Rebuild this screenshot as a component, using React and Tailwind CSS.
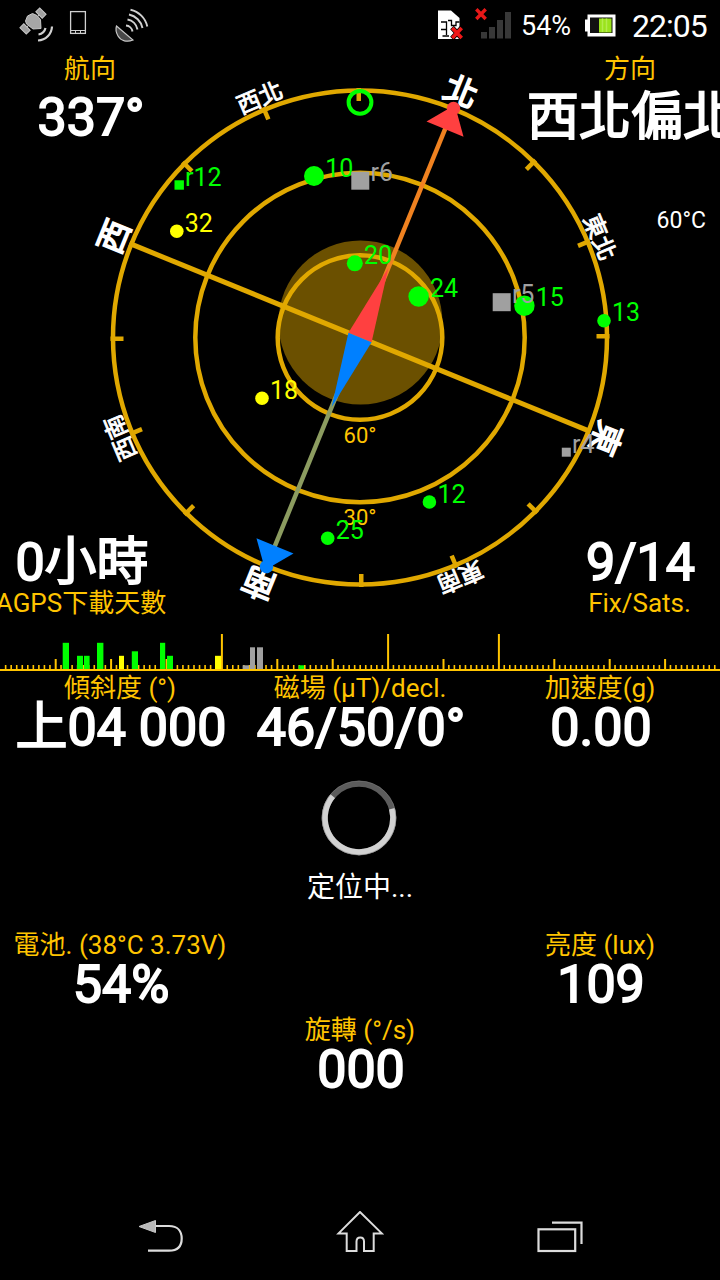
import React from 'react';

const GOLD = '#e0a800';
const AMBER = '#ffc400';
const GREEN = '#00ff00';
const YELLOW = '#ffff00';
const GRAY = '#a0a0a0';

// Sky plot geometry
const CX = 360;
const CY = 337.5;
const HEADING = 22.2;

const satellites = [
  { id: '10', x: 314, y: 176, r: 10, color: GREEN },
  { id: 'r12', x: 179.2, y: 185, r: 4.7, color: GREEN, square: true },
  { id: '32', x: 176.8, y: 231.3, r: 6.8, color: YELLOW },
  { id: '20', x: 354.8, y: 263.3, r: 8, color: GREEN },
  { id: '24', x: 418.6, y: 296.5, r: 10.2, color: GREEN },
  { id: 'r6', x: 360.3, y: 180.7, r: 9, color: GRAY, square: true },
  { id: '15', x: 524.4, y: 305.8, r: 10.2, color: GREEN },
  { id: 'r5', x: 501.7, y: 302.2, r: 9, color: GRAY, square: true },
  { id: '13', x: 604, y: 320.8, r: 6.8, color: GREEN },
  { id: '18', x: 262, y: 398.3, r: 6.8, color: YELLOW },
  { id: '12', x: 429.4, y: 502, r: 6.8, color: GREEN },
  { id: '25', x: 327.7, y: 538.2, r: 6.8, color: GREEN },
  { id: 'r4', x: 566.3, y: 452.2, r: 4.5, color: GRAY, square: true },
];

const directions = [
  { label: '北', angle: 0, major: true },
  { label: '東北', angle: 45 },
  { label: '東', angle: 90, major: true },
  { label: '東南', angle: 135 },
  { label: '南', angle: 180, major: true },
  { label: '西南', angle: 225 },
  { label: '西', angle: 270, major: true },
  { label: '西北', angle: 315 },
];

// [x, width, height, color]
const signalBars = [
  [62.7, 6.3, 26.5, GREEN],
  [77, 6, 13.5, GREEN],
  [84, 5.6, 13.5, GREEN],
  [97, 6.4, 26.5, GREEN],
  [119, 5, 13.5, YELLOW],
  [131.8, 6.2, 18, GREEN],
  [160, 5.2, 26.5, GREEN],
  [167, 6, 13.5, GREEN],
  [215, 6, 13.5, YELLOW],
  [242.6, 6.6, 4, GRAY],
  [250, 5, 22, GRAY],
  [257, 6, 22, GRAY],
  [298.6, 5.4, 4, GREEN],
];

const StatusBar = () => (
  <header className="flex h-[50px] shrink-0 items-center pl-[19px] pr-[11px] text-white">
    {/* GPS satellite */}
    <svg className="h-[50px] w-[36px]" viewBox="19 0 36 50">
      <g transform="rotate(-45 33 21)" stroke="#c8c8c8" strokeWidth="1">
        <rect x="19" y="16.500" width="5.500" height="9" fill="#a0a0a0" />
        <rect x="41.500" y="16.500" width="5.500" height="9" fill="#a0a0a0" />
        <path d="M24.500 21H41.500" />
      </g>
      <path d="M25.500 21L27.500 16L32.500 13.500L37 15.500L40.500 19.500L41 28.500L33 29L26.500 24Z" fill="#a6a6a6" stroke="#c8c8c8" strokeWidth="1" />
      <path d="M45.500 28A8.500 8.500 0 0 1 38.500 34.500M52 26.500A14.500 14.500 0 0 1 38 40.500" fill="none" stroke="#d0d0d0" strokeWidth="2.200" />
    </svg>
    {/* phone */}
    <svg className="ml-[14px] h-[50px] w-[18px]" viewBox="69 0 18 50">
      <rect x="70.600" y="11.600" width="14.800" height="21.800" fill="none" stroke="#d0d0d0" strokeWidth="1.300" />
      <path d="M70 30.500H86M75.500 31V33M80.500 31V33" stroke="#d0d0d0" strokeWidth="1" />
    </svg>
    {/* antenna dish */}
    <svg className="ml-[27px] h-[50px] w-[36px]" viewBox="114 0 36 50">
      <path d="M116.500 26L133 40C127 42.500 121 41 118 36C116 32.500 115.500 29 116.500 26Z" fill="#484848" stroke="#c8c8c8" strokeWidth="1.200" />
      <path d="M126 25.500A7 7 0 0 1 132.500 31.500M127.500 19.500A12.500 12.500 0 0 1 137.500 29.500M129 14.500A17.500 17.500 0 0 1 142.500 28M130.500 9.800A22 22 0 0 1 147.300 26.500" fill="none" stroke="#d0d0d0" strokeWidth="1.900" />
    </svg>
    <div className="flex-1" />
    {/* SIM error */}
    <svg className="h-[50px] w-[28px]" viewBox="436 0 28 50">
      <path d="M438 10.500H451L459.500 18V39H438Z" fill="#fff" />
      <path d="M441 22H446.500V35M441 29.500H446.500M442.500 36H449M448 20.500H451.500V25.500H456V22H459.500" fill="none" stroke="#000" strokeWidth="1.300" />
      <path d="M452 27.500L462 38.500M462 27.500L452 38.500" stroke="#000" strokeWidth="5" />
      <path d="M452.300 28L461.700 38M461.700 28L452.300 38" stroke="#f01818" strokeWidth="3.600" />
    </svg>
    {/* no signal */}
    <svg className="ml-[11px] h-[50px] w-[37px]" viewBox="475 0 37 50">
      <path d="M476.300 9.300L485.700 19M485.700 9.300L476.300 19" stroke="#e81818" strokeWidth="3.400" />
      <path d="M481 32h6v6.500h-6zM489 27h6v11.500h-6zM497 20h6v18.500h-6zM505 12h6v26.500h-6z" fill="#383838" />
    </svg>
    <span className="ml-[9px] w-[53px] pt-[2px] text-[27px] leading-[50px]">54%</span>
    {/* battery */}
    <svg className="ml-[10px] h-[50px] w-[32px]" viewBox="584 0 32 50">
      <path d="M587.500 14.500H615.500V36.500H587.500V31.500H585V19.500H587.500Z" fill="#fff" />
      <rect x="590" y="17.500" width="22.500" height="15.500" fill="#111" />
      <rect x="599" y="18.500" width="12.500" height="14" fill="#9be31c" />
      <path d="M602.500 18.500V32M606.500 18.500V32" stroke="#b4ec4c" strokeWidth="1.500" />
    </svg>
    <span className="ml-[16px] w-[77px] pt-[2px] text-[32px] leading-[50px] tracking-[-1px]">22:05</span>
  </header>
);

const Label = ({ children }) => (
  <span className="whitespace-nowrap text-[26px] leading-[29px] text-[#ffc400]">{children}</span>
);

// The outline gives latin and CJK glyphs the same extra weight
const Value = ({ children }) => (
  <span className="whitespace-nowrap pl-[2px] text-[52px] leading-[52px] text-white [-webkit-text-stroke:1.8px_white]">
    {children}
  </span>
);

const Readout = ({ label, value }) => (
  <div className="flex h-20 w-[240px] flex-col items-center">
    <Label>{label}</Label>
    <div className="-mt-px flex">
      <Value>{value}</Value>
    </div>
  </div>
);

const SkyPlot = () => {
  const ticks = Array.from({ length: 16 }, (_, i) => i * 22.5).filter((a) => a % 90 !== 0);

  return (
    <svg className="absolute inset-0" width="720" height="580" viewBox="0 50 720 580">
      <circle cx="360.500" cy="322.500" r="82" fill="#6b5000" />

      <g fill="none" stroke={GOLD} strokeWidth="4.500">
        <circle cx={CX} cy={CY} r="247" />
        <circle cx={CX} cy={CY} r="164.700" />
        <circle cx={CX} cy={CY} r="82.300" />
      </g>

      <g transform={`translate(${CX} ${CY}) rotate(${HEADING})`}>
        {ticks.map((a) => (
          <path key={a} d="M0 -249.500V-236.500" transform={`rotate(${a})`} stroke={GOLD} strokeWidth="4.500" />
        ))}
        <path d="M-249 0H249" stroke={GOLD} strokeWidth="5" />
        {directions.map((d) => (
          <text
            key={d.label}
            transform={`rotate(${d.angle})`}
            x="0.500"
            y={d.major ? -254 : -251.5}
            textAnchor="middle"
            fill="#fff"
            stroke="#fff"
            strokeWidth={d.major ? 1.6 : 0.9}
            fontSize={d.major ? 33 : 23.5}
          >
            {d.label}
          </text>
        ))}

        {/* compass needle */}
        <path d="M0 -240V-60" stroke="#f08220" strokeWidth="4.500" />
        <path d="M0 240V60" stroke="#8c9c60" strokeWidth="4.500" />
        <path d="M-12.500 0L0 -75L12.500 0Z" fill="#ff4040" />
        <path d="M-12.500 0L0 75L12.500 0Z" fill="#0080ff" />
        <path d="M-20 -225H20L0 -251Z" fill="#ff4040" />
        <circle cy="-247.500" r="6.700" fill="#ff4040" />
        <path d="M-20 225H20L0 251Z" fill="#0080ff" />
        <circle cy="247.500" r="6.700" fill="#0080ff" />
      </g>

      <text x="360" y="442.500" textAnchor="middle" fontSize="22" fill={AMBER}>60°</text>
      <text x="360" y="524.500" textAnchor="middle" fontSize="22" fill={AMBER}>30°</text>

      <circle cx="360" cy="102.300" r="11.400" fill="none" stroke={GREEN} strokeWidth="4" />

      {satellites.map((s) => (
        <g key={s.id} fill={s.color}>
          {s.square ? (
            <rect x={s.x - s.r} y={s.y - s.r} width={s.r * 2} height={s.r * 2} />
          ) : (
            <circle cx={s.x} cy={s.y} r={s.r} />
          )}
          <text x={s.x + s.r + 1.2} y={s.y + 0.5} fontSize="25">{s.id}</text>
        </g>
      ))}
    </svg>
  );
};

const SignalStrip = () => {
  const tall = [40, 70, 90];
  return (
    <svg className="block shrink-0" width="720" height="42" viewBox="0 630 720 42">
      {Array.from({ length: 129 }, (_, n) => {
        const i = n + 1;
        const h = tall.includes(i) ? 35 : i % 10 === 0 ? 10 : 4;
        return <rect key={i} x={i * 5.54 - 0.7} y={669 - h} width={h > 4 ? 2 : 1.6} height={h} fill={AMBER} />;
      })}
      {signalBars.map(([x, w, h, color]) => (
        <rect key={x} x={x} y={669.3 - h} width={w} height={h} fill={color} />
      ))}
      <rect x="0" y="669" width="720" height="2" fill={AMBER} />
    </svg>
  );
};

const Spinner = () => (
  <svg className="mr-[2px]" width="80" height="80" viewBox="-40 -40 80 80">
    <circle r="34.200" fill="none" stroke="#5c5c5c" strokeWidth="6" />
    <path d="M-26.300 -21.900A34.200 34.200 0 1 0 32.900 -9.300" fill="none" stroke="#d2d2d2" strokeWidth="6" />
    <circle r="37" fill="none" stroke="#808080" strokeWidth="0.800" opacity="0.700" />
  </svg>
);

const NavBar = () => (
  <nav className="mx-auto flex h-[88px] w-[600px] shrink-0">
    <button className="flex w-[200px] items-center justify-center">
      <svg width="50" height="50" viewBox="135 1211 50 50" fill="none" stroke="#dcdcdc" strokeWidth="2.200">
        <path d="M155 1226H169C178 1226 181.700 1231.500 181.700 1238.500C181.700 1245.500 178 1250.700 169 1250.700H148" />
        <path d="M155.500 1220.500V1232.500L139 1226.500Z" fill="#b8b8b8" stroke="#c8c8c8" strokeWidth="1" />
      </svg>
    </button>
    <button className="flex w-[200px] items-center justify-center">
      <svg width="50" height="50" viewBox="335 1211 50 50" fill="none" stroke="#dcdcdc" strokeWidth="2">
        <path d="M360 1212L338.500 1233.400H346.700V1251H356.500V1241.500C356.500 1236 364 1236 364 1241.500V1251H373.700V1233.400H381.800Z" />
      </svg>
    </button>
    <button className="flex w-[200px] items-center justify-center">
      <svg width="50" height="50" viewBox="535 1211 50 50" fill="none" stroke="#dcdcdc" strokeWidth="2.200">
        <rect x="538.500" y="1229.300" width="36.700" height="21.700" />
        <path d="M552 1222.700H581.500V1244" />
      </svg>
    </button>
  </nav>
);

const GpsStatus = () => (
  <div className="flex h-[1280px] w-[720px] flex-col overflow-hidden bg-black font-['Roboto','Noto_Sans_CJK_TC',sans-serif]">
    <StatusBar />

    <section className="relative flex h-[580px] shrink-0 flex-col justify-between">
      <SkyPlot />
      <div className="relative flex justify-between pt-[5px]">
        <div className="flex w-[180px] flex-col items-center gap-2">
          <Label>航向</Label>
          <Value>337°</Value>
        </div>
        <div className="flex w-[180px] flex-col items-center gap-2">
          <Label>方向</Label>
          <Value>西北偏北</Value>
          <span className="mt-[55px] self-end pr-[14px] text-[23px] leading-7 text-white">60°C</span>
        </div>
      </div>
      <div className="relative flex justify-between pb-3">
        <div className="flex w-[162px] flex-col items-center">
          <Value>0小時</Value>
          <Label>AGPS下載天數</Label>
        </div>
        <div className="flex w-[161px] flex-col items-center">
          <Value>9/14</Value>
          <Label>Fix/Sats.</Label>
        </div>
      </div>
    </section>

    <SignalStrip />

    <section className="flex shrink-0 pt-[2px]">
      <Readout label="傾斜度 (°)" value="上04 000" />
      <Readout label="磁場 (µT)/decl." value="46/50/0°" />
      <Readout label="加速度(g)" value="0.00" />
    </section>

    <section className="flex shrink-0 flex-col items-center pt-6">
      <Spinner />
      <p className="mt-3.5 text-[28px] leading-8 text-white">定位中...</p>
    </section>

    <section className="flex shrink-0 justify-between pt-[27px]">
      <Readout label="電池. (38°C 3.73V)" value="54%" />
      <Readout label="亮度 (lux)" value="109" />
    </section>

    <section className="flex flex-1 justify-center pt-[5px]">
      <Readout label="旋轉 (°/s)" value="000" />
    </section>

    <NavBar />
  </div>
);

export default GpsStatus;
